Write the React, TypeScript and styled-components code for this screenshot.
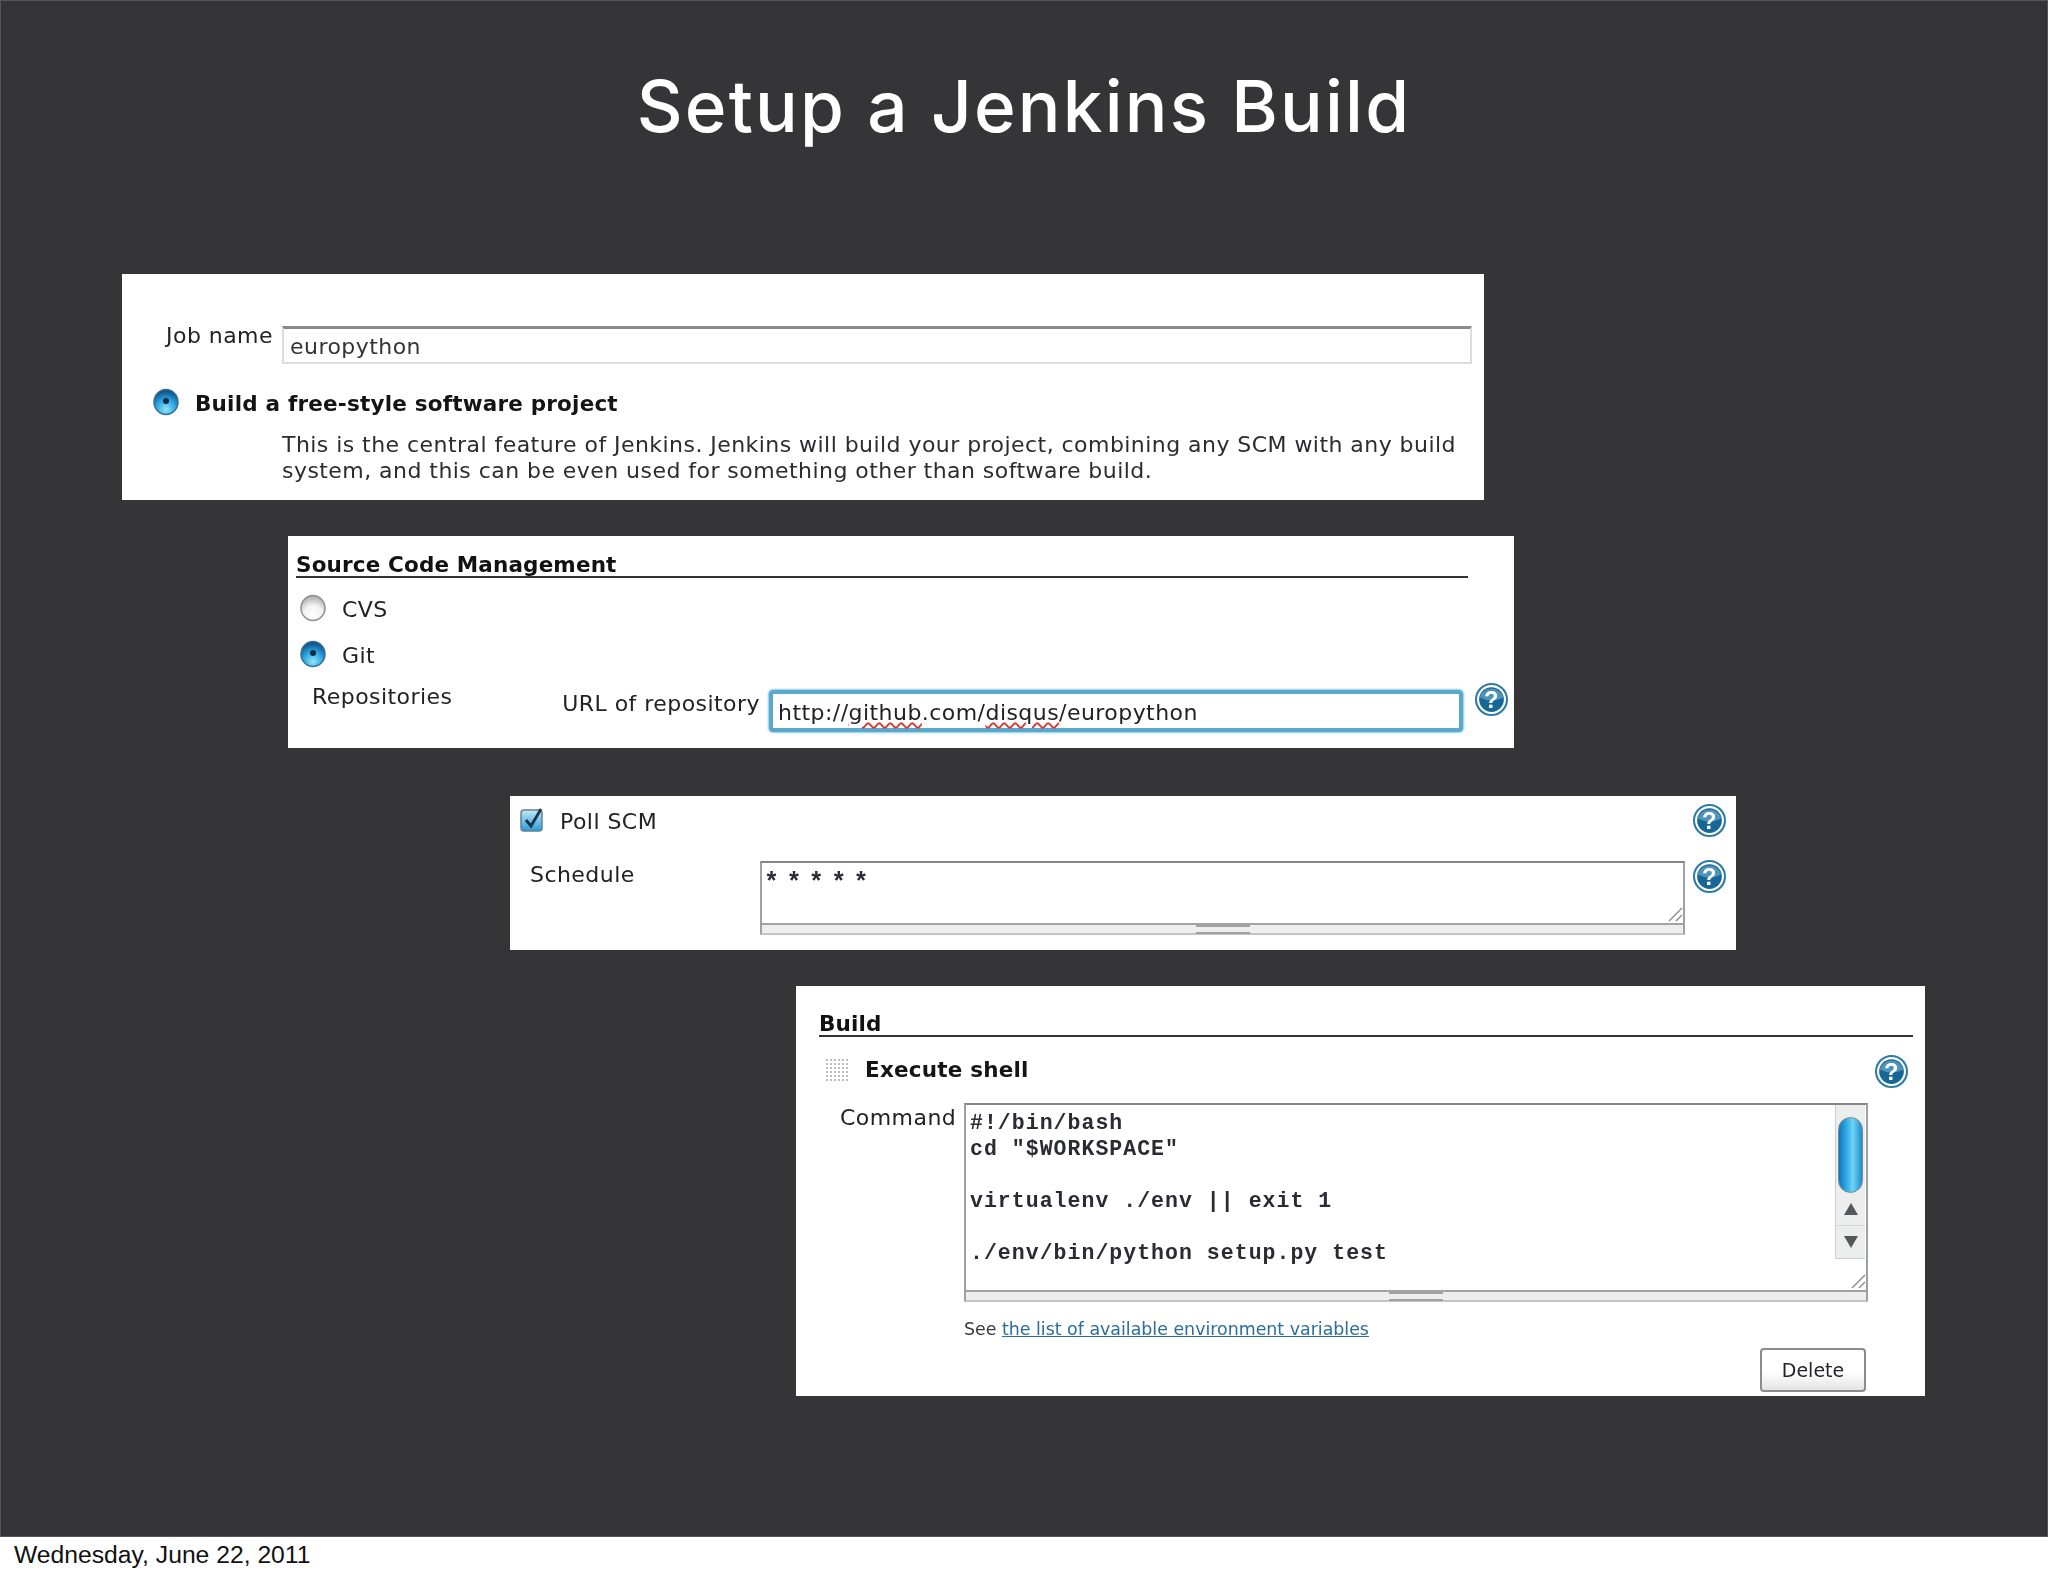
import React from "react";
import styled, { createGlobalStyle } from "styled-components";

const GlobalStyle = createGlobalStyle`
html, body {
    margin: 0;
    padding: 0;
    background: #ffffff;
}
`

const Page = styled.div`
width: 2048px;
height: 1576px;
overflow: hidden;
display: flex;
flex-direction: column;
`

const Slide = styled.div`
height: 1537px;
box-sizing: border-box;
background: #353436;
border: 1px solid #55555a;
display: flex;
flex-direction: column;
`

const Title = styled.h1`
margin: 0;
height: 273px;
box-sizing: border-box;
padding-top: 66px;
text-align: center;
font-family: Inter, "Open Sans", sans-serif;
font-size: 71px;
font-weight: 500;
line-height: 78px;
letter-spacing: 2.2px;
color: #ffffff;
`

const Panel = styled.section<{ $left: number; $width: number; $height: number; $top: number }>`
flex: none;
box-sizing: border-box;
margin-top: ${(p) => p.$top}px;
margin-left: ${(p) => p.$left - 1}px;
width: ${(p) => p.$width}px;
height: ${(p) => p.$height}px;
background: #ffffff;
color: #222226;
font-family: "DejaVu Sans", Verdana, sans-serif;
font-size: 22px;
letter-spacing: 0.45px;
line-height: 26px;
filter: blur(0.5px);
`

const Row = styled.div<{ $top?: number; $left?: number; $right?: number }>`
display: flex;
align-items: flex-start;
margin-top: ${(p) => p.$top || 0}px;
padding-left: ${(p) => p.$left || 0}px;
padding-right: ${(p) => p.$right || 0}px;
`

const Label = styled.div<{ $width: number; $right?: boolean; $top?: number }>`
flex: none;
width: ${(p) => p.$width}px;
margin-top: ${(p) => p.$top || 0}px;
text-align: ${(p) => (p.$right ? "right" : "left")};
white-space: nowrap;
`

const TextInput = styled.div<{ $width: number; $left: number; $top: number }>`
flex: none;
box-sizing: border-box;
width: ${(p) => p.$width}px;
height: 38px;
margin-left: ${(p) => p.$left}px;
margin-top: ${(p) => p.$top}px;
padding: 3px 7px;
border: 2px solid #dcdcdc;
border-top: 3px solid #8a8a8a;
color: #333338;
line-height: 30px;
text-indent: -1px;
`

const FocusedInput = styled.div`
flex: none;
box-sizing: border-box;
width: 694px;
height: 42px;
margin-left: 9px;
margin-top: 7px;
padding: 5px 5px;
border: 4px solid #5aa9cc;
border-radius: 4px;
box-shadow: 0 0 2px 1px #8ccbe4;
color: #222226;
line-height: 27px;
white-space: nowrap;
`

const Squiggle = styled.span`
text-decoration: underline wavy #d8362f 2px;
text-underline-offset: 2px;
`

const BoldLine = styled.div`
font-weight: 700;
font-size: 21.5px;
letter-spacing: 0.2px;
white-space: nowrap;
color: #141416;
`

const OptionText = styled.span`
padding-top: 4px;
white-space: nowrap;
`

const Description = styled.p`
margin: 13px 0 0 160px;
width: 1200px;
line-height: 26px;
color: #2c2c30;
white-space: nowrap;
`

const Heading = styled.div<{ $width: number; $left: number; $top: number }>`
box-sizing: content-box;
width: ${(p) => p.$width}px;
margin-left: ${(p) => p.$left}px;
margin-top: ${(p) => p.$top + 3}px;
border-bottom: 2px solid #333336;
font-weight: 700;
font-size: 21.5px;
letter-spacing: 0.15px;
line-height: 23px;
color: #111113;
white-space: nowrap;
`

const OptionRow = styled.div<{ $top: number; $left: number; $gap: number; $right?: number }>`
display: flex;
align-items: center;
height: 30px;
margin-top: ${(p) => p.$top}px;
padding-left: ${(p) => p.$left}px;
padding-right: ${(p) => p.$right || 0}px;
gap: ${(p) => p.$gap}px;
`

const HelpSlot = styled.div<{ $left?: number; $top?: number }>`
flex: none;
width: 33px;
height: 33px;
margin-left: ${(p) => (p.$left === undefined ? "auto" : `${p.$left}px`)};
margin-top: ${(p) => p.$top || 0}px;
`

const TextBox = styled.div<{ $width: number; $height: number; $left?: number; $top?: number }>`
flex: none;
position: relative;
box-sizing: border-box;
width: ${(p) => p.$width}px;
height: ${(p) => p.$height + 12}px;
margin-left: ${(p) => p.$left || 0}px;
margin-top: ${(p) => p.$top || 0}px;
border: 2px solid #a0a0a2;
border-top-color: #86868a;
border-bottom-color: #c4c4c6;
background: #ffffff;
display: flex;
flex-direction: column;
`

const TextArea = styled.pre<{ $small?: boolean }>`
flex: 1;
margin: 0;
padding: ${(p) => (p.$small ? "8px" : "5px")} ${(p) => (p.$small ? "2px" : "4px")} 0;
font-family: "Liberation Mono", "Courier New", monospace;
font-weight: 700;
font-size: ${(p) => (p.$small ? "25px" : "21.5px")};
letter-spacing: ${(p) => (p.$small ? "-3.8px" : "1.03px")};
line-height: 26px;
color: #2b2b33;
overflow: hidden;
`

const StretchBar = styled.div`
flex: none;
height: 10px;
display: flex;
justify-content: center;
padding-top: 2px;
box-sizing: border-box;
background: #eeeeef;
border-top: 2px solid #a3a3a5;
`

const StretchGrip = styled.div`
width: 54px;
height: 5px;
border-top: 2px solid #a2a2a2;
border-bottom: 2px solid #a2a2a2;
margin-top: -2px;
`

const ResizeCorner = styled.svg`
position: absolute;
right: 0;
bottom: 11px;
`

const ScrollTrack = styled.div`
position: absolute;
top: 0;
right: 1px;
width: 30px;
height: 154px;
box-sizing: border-box;
background: #eceded;
border-left: 1px solid #cfcfcf;
border-bottom: 1px solid #cfcfcf;
display: flex;
flex-direction: column;
align-items: center;
`

const ScrollThumb = styled.div`
box-sizing: border-box;
width: 25px;
height: 76px;
margin-top: 12px;
border-radius: 13px;
border: 1px solid #7d8a92;
background: linear-gradient(90deg, #0d77c0 0%, #35aee6 35%, #6fd3f4 60%, #1b8ed0 100%);
`

const ScrollButton = styled.div<{ $up?: boolean }>`
flex: 1;
align-self: stretch;
display: flex;
align-items: center;
justify-content: center;
border-top: ${(p) => (p.$up ? "none" : "1px solid #d5d5d5")};
`

const Arrow = styled.div<{ $up?: boolean }>`
width: 0;
height: 0;
border-left: 7px solid transparent;
border-right: 7px solid transparent;
${(p) => (p.$up ? "border-bottom: 12px solid #55565a;" : "border-top: 12px solid #55565a;")}
`

const SeeLine = styled.div`
margin: 15px 0 0 168px;
font-size: 17.4px;
letter-spacing: 0;
line-height: 24px;
color: #3a3a3e;
white-space: nowrap;
`

const DocLink = styled.a`
color: #2b6d9b;
text-decoration: underline;
`

const DeleteButton = styled.button`
display: block;
box-sizing: border-box;
width: 106px;
height: 44px;
margin: 7px 0 0 964px;
padding: 0;
border: 2px solid #8b8b8b;
border-radius: 4px;
background: linear-gradient(#ffffff 55%, #e3e3e3 100%);
font-family: "DejaVu Sans", Verdana, sans-serif;
font-size: 19px;
color: #22222a;
`

const Footer = styled.footer`
height: 39px;
box-sizing: border-box;
padding-left: 14px;
background: #ffffff;
font-family: "Liberation Sans", Arial, sans-serif;
font-size: 24.7px;
line-height: 36px;
color: #111111;
white-space: nowrap;
`

const RadioIcon = styled.svg<{ $lift?: number }>`
flex: none;
margin-top: ${(p) => -(p.$lift || 0)}px;
`

const Radio: React.FC<{ checked?: boolean; lift?: number }> = ({ checked, lift }) => {
    const id = checked ? "radioOn" : "radioOff";
    return (
        <RadioIcon $lift={lift} width="26" height="30" viewBox="0 0 26 30">
            <defs>
                <radialGradient id={id} cx="50%" cy="80%" r="75%">
                    <stop offset="0%" stopColor={checked ? "#8fe6fb" : "#ffffff"} />
                    <stop offset="55%" stopColor={checked ? "#2ba3de" : "#f2f2f2"} />
                    <stop offset="100%" stopColor={checked ? "#0c4f86" : "#b0b0b0"} />
                </radialGradient>
            </defs>
            <ellipse cx="13" cy="15" rx="12" ry="12.5" fill={`url(#${id})`} stroke={checked ? "#3a6f92" : "#8f8f8f"} strokeWidth="1.5" />
            {checked && <circle cx="13" cy="14" r="3" fill="#0f2c44" />}
        </RadioIcon>
    )
}

const Help: React.FC = () => (
    <svg width="33" height="33" viewBox="0 0 32 32">
        <circle cx="16" cy="16" r="15" fill="#ffffff" stroke="#2d7ba6" strokeWidth="2" />
        <circle cx="16" cy="16" r="12" fill="#176796" />
        <path d="M4.5 14 A12 12 0 0 1 27.5 14 Q16 20 4.5 14Z" fill="#4f93ba" />
        <text x="16" y="24" textAnchor="middle" fontFamily="Liberation Sans, sans-serif" fontWeight="700" fontSize="23" fill="#ffffff">?</text>
    </svg>
)

const CheckBox: React.FC = () => (
    <svg width="24" height="26" viewBox="0 0 24 26" style={{ flex: "none" }}>
        <defs>
            <linearGradient id="checkFill" x1="0" y1="0" x2="0" y2="1">
                <stop offset="0%" stopColor="#c4e8f8" />
                <stop offset="100%" stopColor="#2a9ad8" />
            </linearGradient>
        </defs>
        <rect x="1" y="3" width="21" height="21" rx="3" fill="url(#checkFill)" stroke="#5c8198" strokeWidth="1.5" />
        <path d="M6 13 L11 19 L21 2" fill="none" stroke="#1a3346" strokeWidth="2.8" />
    </svg>
)

const DragDots: React.FC = () => (
    <svg width="24" height="24" viewBox="0 0 24 24" style={{ flex: "none" }}>
        {[0, 1, 2, 3, 4, 5].map((r) =>
            [0, 1, 2, 3, 4, 5].map((c) => (
                <rect key={`${r}-${c}`} x={1 + c * 4} y={1 + r * 4} width="2" height="2" fill="#bdbdbd" />
            ))
        )}
    </svg>
)

const Corner: React.FC = () => (
    <ResizeCorner width="16" height="16" viewBox="0 0 16 16">
        <path d="M2 15 L15 2 M9 15 L15 9" stroke="#8a8a8a" strokeWidth="1.4" fill="none" />
    </ResizeCorner>
)

const App: React.FC = () => {
    return (
        <Page>
            <GlobalStyle />
            <Slide>
                <Title>Setup a Jenkins Build</Title>

                <Panel $left={122} $width={1362} $height={226} $top={0}>
                    <Row $top={49}>
                        <Label $width={151} $right>Job name</Label>
                        <TextInput $width={1190} $left={9} $top={3}>europython</TextInput>
                    </Row>
                    <OptionRow $top={25} $left={31} $gap={16}>
                        <Radio checked lift={4} />
                        <BoldLine>Build a free-style software project</BoldLine>
                    </OptionRow>
                    <Description>
                        This is the central feature of Jenkins. Jenkins will build your project, combining any SCM with any build<br />
                        system, and this can be even used for something other than software build.
                    </Description>
                </Panel>

                <Panel $left={288} $width={1226} $height={212} $top={36}>
                    <Heading $width={1172} $left={8} $top={14}>Source Code Management</Heading>
                    <OptionRow $top={15} $left={12} $gap={16}>
                        <Radio />
                        <OptionText>CVS</OptionText>
                    </OptionRow>
                    <OptionRow $top={16} $left={12} $gap={16}>
                        <Radio checked />
                        <OptionText>Git</OptionText>
                    </OptionRow>
                    <Row $top={14} $left={24}>
                        <Label $width={240} $top={1}>Repositories</Label>
                        <Label $width={208} $right $top={8}>URL of repository</Label>
                        <FocusedInput>
                            http://<Squiggle>github</Squiggle>.com/<Squiggle>disqus</Squiggle>/europython
                        </FocusedInput>
                        <HelpSlot $left={12}><Help /></HelpSlot>
                    </Row>
                </Panel>

                <Panel $left={510} $width={1226} $height={154} $top={48}>
                    <OptionRow $top={9} $left={10} $gap={16} $right={10}>
                        <CheckBox />
                        <OptionText>Poll SCM</OptionText>
                        <HelpSlot><Help /></HelpSlot>
                    </OptionRow>
                    <Row $top={25} $left={20}>
                        <Label $width={230} $top={2}>Schedule</Label>
                        <TextBox $width={925} $height={62} $top={1}>
                            <TextArea $small>* * * * *</TextArea>
                            <Corner />
                            <StretchBar><StretchGrip /></StretchBar>
                        </TextBox>
                        <HelpSlot $left={8}><Help /></HelpSlot>
                    </Row>
                </Panel>

                <Panel $left={796} $width={1129} $height={410} $top={36}>
                    <Heading $width={1094} $left={23} $top={23}>Build</Heading>
                    <Row $top={18} $left={29} $right={17}>
                        <OptionRow $top={0} $left={0} $gap={16}>
                            <DragDots />
                            <BoldLine>Execute shell</BoldLine>
                        </OptionRow>
                        <HelpSlot><Help /></HelpSlot>
                    </Row>
                    <Row $top={15} $left={44}>
                        <Label $width={124} $top={2}>Command</Label>
                        <TextBox $width={904} $height={187}>
                            <TextArea>{`#!/bin/bash
cd "$WORKSPACE"

virtualenv ./env || exit 1

./env/bin/python setup.py test`}</TextArea>
                            <ScrollTrack>
                                <ScrollThumb />
                                <ScrollButton $up><Arrow $up /></ScrollButton>
                                <ScrollButton><Arrow /></ScrollButton>
                            </ScrollTrack>
                            <Corner />
                            <StretchBar><StretchGrip /></StretchBar>
                        </TextBox>
                    </Row>
                    <SeeLine>See <DocLink href="#">the list of available environment variables</DocLink></SeeLine>
                    <DeleteButton>Delete</DeleteButton>
                </Panel>
            </Slide>
            <Footer>Wednesday, June 22, 2011</Footer>
        </Page>
    )
}

export default App
